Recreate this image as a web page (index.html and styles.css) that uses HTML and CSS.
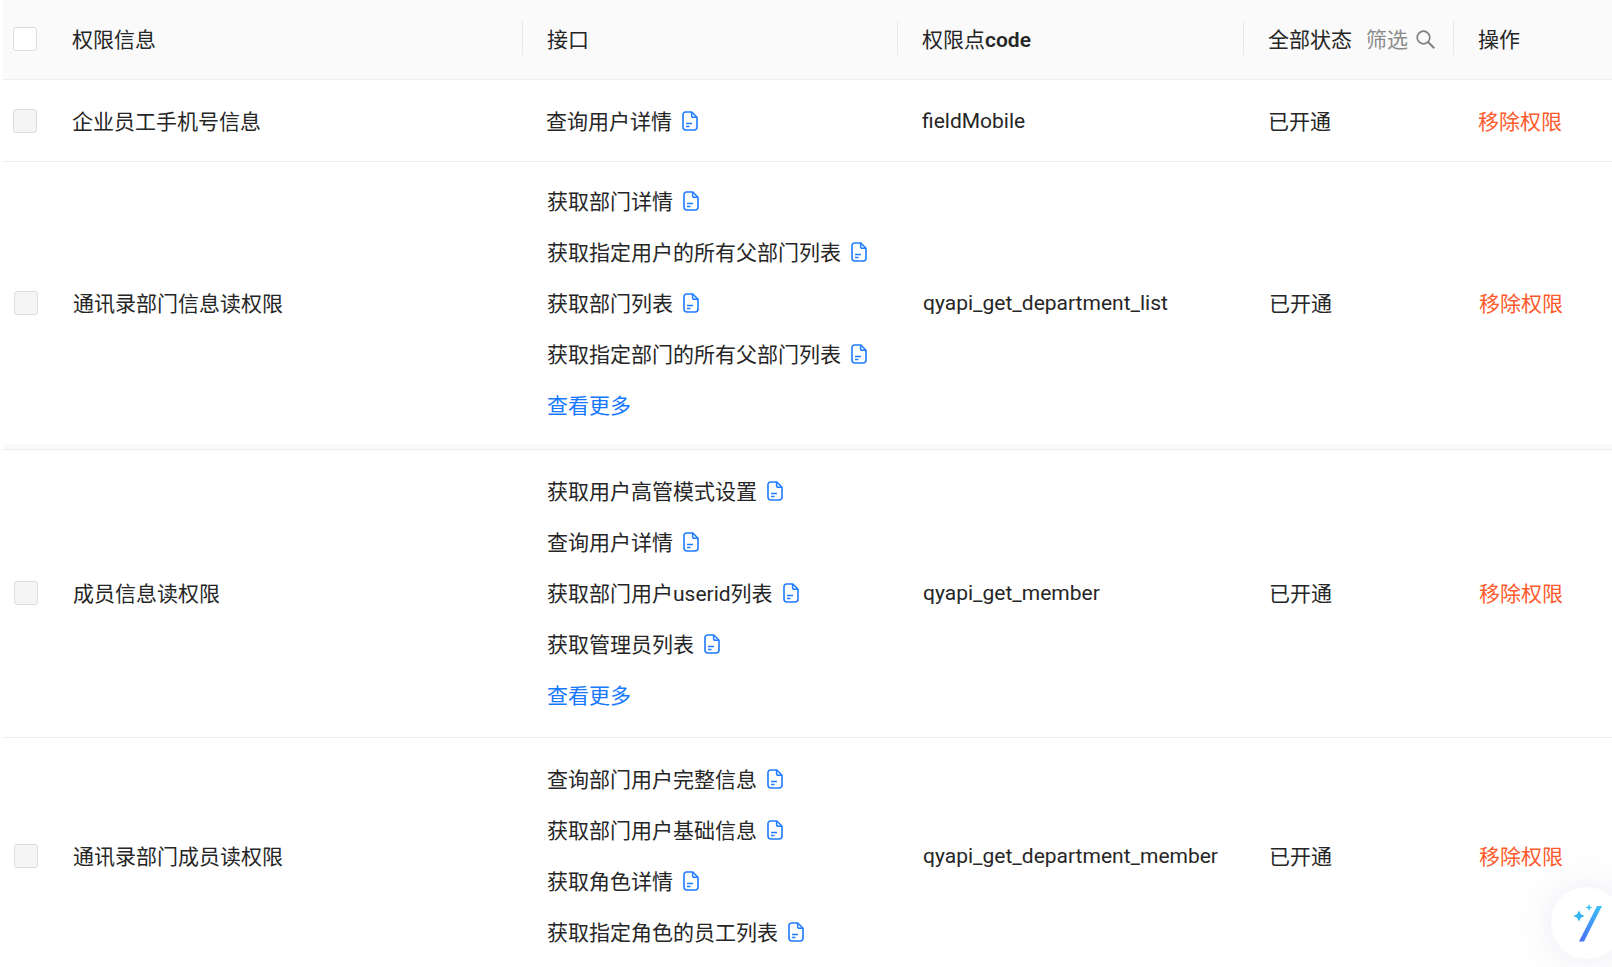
FILE: index.html
```html
<!DOCTYPE html>
<html lang="zh-CN">
<head>
<meta charset="utf-8">
<title>权限信息</title>
<link rel="stylesheet" href="styles.css">
</head>
<body>
<svg class="defs" width="0" height="0" aria-hidden="true">
  <symbol id="doc" viewBox="0 0 16 20">
    <path d="M3.500 1h6.300L15 6.200v9.800a3 3 0 0 1-3 3H4a3 3 0 0 1-3-3V3.500A2.500 2.500 0 0 1 3.500 1z" fill="none" stroke="#1f7bff" stroke-width="1.600" stroke-linejoin="round"/>
    <path d="M9.600 1.200v3.300a1.800 1.800 0 0 0 1.800 1.800h3.400" fill="none" stroke="#1f7bff" stroke-width="1.500"/>
    <path d="M4 12.500h6M4 15.500h3.500" fill="none" stroke="#1f7bff" stroke-width="1.500"/>
  </symbol>
</svg>
<main class="table">
  <div class="row head">
    <div class="cell first"><span class="check blank"></span><span class="t">权限信息</span></div>
    <div class="cell"><i class="sep"></i><span class="t">接口</span></div>
    <div class="cell"><i class="sep"></i><span class="t">权限点<b>code</b></span></div>
    <div class="cell status"><i class="sep"></i><span class="t">全部状态</span><span class="filter"><span class="t">筛选</span><svg class="search" viewBox="0 0 19 19"><circle cx="7.500" cy="7.500" r="6.300" fill="none" stroke="#808080" stroke-width="1.700"/><path d="M12 12L18.300 18.300" stroke="#808080" stroke-width="2"/></svg></span></div>
    <div class="cell"><i class="sep"></i><span class="t">操作</span></div>
  </div>

  <div class="row r1">
    <div class="cell first"><span class="check"></span><span class="t">企业员工手机号信息</span></div>
    <div class="cell list">
      <div class="api">查询用户详情<svg class="doc"><use href="#doc"/></svg></div>
    </div>
    <div class="cell">fieldMobile</div>
    <div class="cell"><span class="t">已开通</span></div>
    <div class="cell"><a class="remove t">移除权限</a></div>
  </div>

  <div class="row shift r2">
    <div class="cell first"><span class="check"></span><span class="t">通讯录部门信息读权限</span></div>
    <div class="cell list">
      <div class="api">获取部门详情<svg class="doc"><use href="#doc"/></svg></div>
      <div class="api">获取指定用户的所有父部门列表<svg class="doc"><use href="#doc"/></svg></div>
      <div class="api">获取部门列表<svg class="doc"><use href="#doc"/></svg></div>
      <div class="api">获取指定部门的所有父部门列表<svg class="doc"><use href="#doc"/></svg></div>
      <div class="api more">查看更多</div>
    </div>
    <div class="cell">qyapi_get_department_list</div>
    <div class="cell"><span class="t">已开通</span></div>
    <div class="cell"><a class="remove t">移除权限</a></div>
  </div>
  <div class="band"></div>

  <div class="row shift r3">
    <div class="cell first"><span class="check"></span><span class="t">成员信息读权限</span></div>
    <div class="cell list">
      <div class="api">获取用户高管模式设置<svg class="doc"><use href="#doc"/></svg></div>
      <div class="api">查询用户详情<svg class="doc"><use href="#doc"/></svg></div>
      <div class="api">获取部门用户userid列表<svg class="doc"><use href="#doc"/></svg></div>
      <div class="api">获取管理员列表<svg class="doc"><use href="#doc"/></svg></div>
      <div class="api more">查看更多</div>
    </div>
    <div class="cell">qyapi_get_member</div>
    <div class="cell"><span class="t">已开通</span></div>
    <div class="cell"><a class="remove t">移除权限</a></div>
  </div>

  <div class="row shift r4">
    <div class="cell first"><span class="check"></span><span class="t">通讯录部门成员读权限</span></div>
    <div class="cell list">
      <div class="api">查询部门用户完整信息<svg class="doc"><use href="#doc"/></svg></div>
      <div class="api">获取部门用户基础信息<svg class="doc"><use href="#doc"/></svg></div>
      <div class="api">获取角色详情<svg class="doc"><use href="#doc"/></svg></div>
      <div class="api">获取指定角色的员工列表<svg class="doc"><use href="#doc"/></svg></div>
    </div>
    <div class="cell">qyapi_get_department_member</div>
    <div class="cell"><span class="t">已开通</span></div>
    <div class="cell"><a class="remove t">移除权限</a></div>
  </div>
</main>
<div class="magic">
  <svg viewBox="0 0 40 40" width="40" height="40">
    <defs><linearGradient id="wand" x1="1" y1="0" x2="0" y2="1"><stop offset="0" stop-color="#3cc4f5"/><stop offset="1" stop-color="#4a6cf7"/></linearGradient></defs>
    <path d="M28 3h5L15 38.500h-5z" fill="url(#wand)"/>
    <path d="M10 7.500l1.800 3.700 3.700 1.800-3.700 1.800L10 18.500l-1.800-3.700L4.500 13l3.700-1.800z" fill="#2eb4f2"/>
    <path d="M20 1l1 2.500 2.500 1-2.500 1-1 2.500-1-2.500-2.500-1 2.500-1z" fill="#3cc4f5"/>
  </svg>
</div>
</body>
</html>
```
FILE: styles.css
```css
html, body { margin: 0; padding: 0; background: #fff; height: 100%; overflow: hidden; }
body {
  font-family: Roboto, "Noto Sans CJK SC", sans-serif;
  font-size: 21px;
  color: #262626;
  position: relative;
}
.defs { position: absolute; }
.table { margin-left: 3px; }
.row {
  display: grid;
  grid-template-columns: 519px 375px 346px 210px 159px;
  border-bottom: 1px solid #eeeeee;
}
.shift { padding-left: 1px; }
.cell {
  position: relative;
  display: flex;
  align-items: center;
  padding-left: 24px;
  min-width: 0;
  white-space: nowrap;
}
.cell:nth-child(n+3), .head .cell:nth-child(2) { padding-left: 25px; }
.first { padding-left: 10px; gap: 35px; }
.t { display: block; padding-bottom: 2px; }
.head { height: 79px; background: #fafafa; }
.head .cell { padding-bottom: 2px; }
.r1 { height: 81px; }
.r2 { height: 282px; border-bottom: 0; }
.band { height: 5px; background: #fafafa; border-bottom: 1px solid #eeeeee; }
.r3 { height: 287px; }
.r3 .cell { padding-bottom: 2px; }
.r4 { height: 235px; border-bottom: 0; }
.sep {
  position: absolute;
  left: 0;
  top: 21px;
  height: 34px;
  width: 1px;
  background: #e8e8e8;
}
.check {
  flex: none;
  width: 22px;
  height: 22px;
  border: 1px solid #dcdcdc;
  border-radius: 3px;
  background: #f5f5f5;
}
.check.blank { background: #fff; }
.head b { font-weight: 600; }
.filter {
  display: inline-flex;
  align-items: center;
  margin-left: 14px;
  color: #8c8c8c;
}
.search { width: 19px; height: 19px; margin: 2px 0 0 8px; }
.list { flex-direction: column; align-items: flex-start; justify-content: center; }
.api { display: flex; align-items: center; height: 51px; box-sizing: border-box; padding-bottom: 2px; }
.doc { width: 16px; height: 20px; margin: 2px 0 0 10px; }
.more { color: #1677ff; }
.remove { color: #ff5a2c; }
.magic {
  position: absolute;
  left: 1551px;
  top: 887px;
  width: 72px;
  height: 72px;
  border-radius: 50%;
  background: #fff;
  box-shadow: 0 0 40px rgba(120, 130, 170, 0.16);
  display: flex;
  align-items: center;
  padding-left: 18px;
  box-sizing: border-box;
}
```
